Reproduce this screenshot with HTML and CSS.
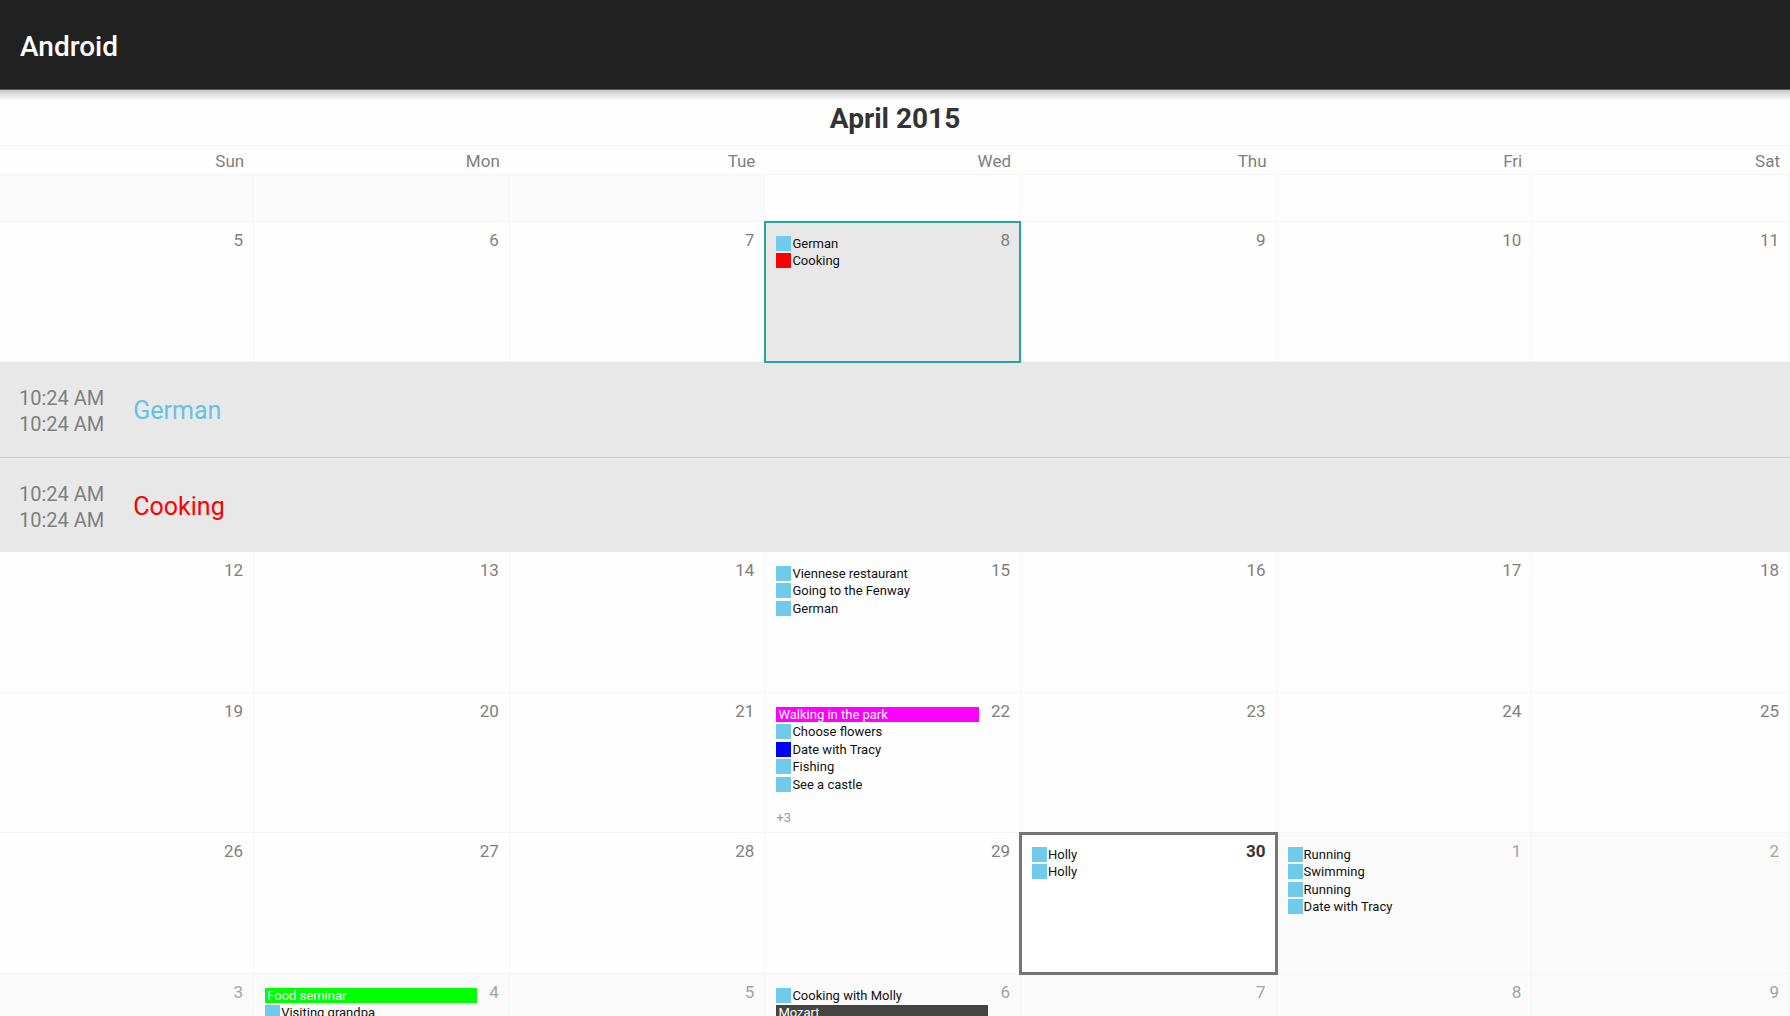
FILE: index.html
```html
<!DOCTYPE html>
<html lang="en">
<head>
<meta charset="utf-8">
<title>Android</title>
<link rel="stylesheet" href="styles.css">
</head>
<body>
<div class="screen">
  <header class="app-bar"><h1 class="app-title">Android</h1></header>
  <main class="calendar">
    <h2 class="month" id="month">April 2015</h2>
    <table class="grid" aria-labelledby="month">
      <colgroup><col class="c-first"><col><col><col><col><col><col class="c-last"></colgroup>
      <thead>
        <tr><th scope="col">Sun</th><th scope="col">Mon</th><th scope="col">Tue</th><th scope="col">Wed</th><th scope="col">Thu</th><th scope="col">Fri</th><th scope="col">Sat</th></tr>
      </thead>
      <tbody>
        <tr class="week partial"><td class="other"></td><td class="other"></td><td class="other"></td><td></td><td></td><td></td><td></td></tr>
        <tr class="week">
          <td><div class="day"><span class="num">5</span></div></td>
          <td><div class="day"><span class="num">6</span></div></td>
          <td><div class="day"><span class="num">7</span></div></td>
          <td class="selected"><div class="day">
            <div class="agenda"><ul class="events">
              <li class="event">German</li>
              <li class="event red">Cooking</li>
            </ul></div>
            <span class="num">8</span></div></td>
          <td><div class="day"><span class="num">9</span></div></td>
          <td><div class="day"><span class="num">10</span></div></td>
          <td><div class="day"><span class="num">11</span></div></td>
        </tr>
        <tr class="details"><td colspan="7">
          <ul class="detail-list">
            <li class="detail"><div class="times"><time>10:24 AM</time><time>10:24 AM</time></div><span class="name">German</span></li>
            <li class="detail"><div class="times"><time>10:24 AM</time><time>10:24 AM</time></div><span class="name name-red">Cooking</span></li>
          </ul>
        </td></tr>
        <tr class="week tall">
          <td><div class="day"><span class="num">12</span></div></td>
          <td><div class="day"><span class="num">13</span></div></td>
          <td><div class="day"><span class="num">14</span></div></td>
          <td><div class="day">
            <div class="agenda"><ul class="events">
              <li class="event">Viennese restaurant</li>
              <li class="event">Going to the Fenway</li>
              <li class="event">German</li>
            </ul></div>
            <span class="num">15</span></div></td>
          <td><div class="day"><span class="num">16</span></div></td>
          <td><div class="day"><span class="num">17</span></div></td>
          <td><div class="day"><span class="num">18</span></div></td>
        </tr>
        <tr class="week">
          <td><div class="day"><span class="num">19</span></div></td>
          <td><div class="day"><span class="num">20</span></div></td>
          <td><div class="day"><span class="num">21</span></div></td>
          <td><div class="day">
            <div class="agenda"><ul class="events">
              <li class="event all-day magenta">Walking in the park</li>
              <li class="event">Choose flowers</li>
              <li class="event blue">Date with Tracy</li>
              <li class="event">Fishing</li>
              <li class="event">See a castle</li>
            </ul>
            <span class="more">+3</span></div>
            <span class="num">22</span></div></td>
          <td><div class="day"><span class="num">23</span></div></td>
          <td><div class="day"><span class="num">24</span></div></td>
          <td><div class="day"><span class="num">25</span></div></td>
        </tr>
        <tr class="week tall">
          <td><div class="day"><span class="num">26</span></div></td>
          <td><div class="day"><span class="num">27</span></div></td>
          <td><div class="day"><span class="num">28</span></div></td>
          <td><div class="day"><span class="num">29</span></div></td>
          <td class="today"><div class="day">
            <div class="agenda"><ul class="events">
              <li class="event">Holly</li>
              <li class="event">Holly</li>
            </ul></div>
            <span class="num">30</span></div></td>
          <td class="other"><div class="day">
            <div class="agenda"><ul class="events">
              <li class="event">Running</li>
              <li class="event">Swimming</li>
              <li class="event">Running</li>
              <li class="event">Date with Tracy</li>
            </ul></div>
            <span class="num">1</span></div></td>
          <td class="other"><div class="day"><span class="num">2</span></div></td>
        </tr>
        <tr class="week">
          <td class="other"><div class="day"><span class="num">3</span></div></td>
          <td class="other"><div class="day">
            <div class="agenda"><ul class="events">
              <li class="event all-day green">Food seminar</li>
              <li class="event">Visiting grandpa</li>
            </ul></div>
            <span class="num">4</span></div></td>
          <td class="other"><div class="day"><span class="num">5</span></div></td>
          <td class="other"><div class="day">
            <div class="agenda"><ul class="events">
              <li class="event">Cooking with Molly</li>
              <li class="event all-day dark">Mozart</li>
            </ul></div>
            <span class="num">6</span></div></td>
          <td class="other"><div class="day"><span class="num">7</span></div></td>
          <td class="other"><div class="day"><span class="num">8</span></div></td>
          <td class="other"><div class="day"><span class="num">9</span></div></td>
        </tr>
      </tbody>
    </table>
  </main>
</div>
</body>
</html>
```
FILE: styles.css
```css
* { box-sizing: border-box; }
body {
  margin: 0;
  font-family: Roboto, "Liberation Sans", sans-serif;
  background: #fefefe;
  color: #7f7f7f;
}
ul { list-style: none; margin: 0; padding: 0; }

.screen { height: 100vh; overflow: hidden; }

.app-bar {
  position: relative;
  display: flex;
  align-items: center;
  height: 90px;
  padding: 3px 20px 0;
  background: #212121;
  border-bottom: 1px solid #5c595b;
}
/* soft shadow the bar casts on the page */
.app-bar::after {
  content: "";
  position: absolute;
  top: 100%;
  left: 0;
  right: 0;
  height: 11px;
  margin-top: 1px;
  background: linear-gradient(#c9c7c8, #e4e4e4 45%, #fefefe);
}
.app-title { margin: 0; font-size: 28px; font-weight: 500; color: #fff; }

.month {
  display: flex;
  align-items: center;
  justify-content: center;
  height: 56px;
  margin: 0;
  padding-top: 2px;
  border-bottom: 1px solid #f3f3f3;
  font-size: 28px;
  font-weight: 700;
  color: #333;
  position: relative;
}

.grid {
  width: 100%;
  table-layout: fixed;
  border-collapse: separate;
  border-spacing: 0;
}
.c-first { width: 14.2%; }
.c-last { width: 14.4%; }
th {
  height: 29px;
  padding: 2px 10px 0 0;
  border-bottom: 1px solid #f5f5f5;
  text-align: right;
  font-size: 17px;
  font-weight: 400;
  line-height: 20px;
}
td { padding: 0; vertical-align: top; }

.week { height: 140px; }
.week.tall { height: 141px; }
.week.partial { height: 47px; }
.week td {
  position: relative;
  border-right: 1px solid #f5f5f5;
  border-bottom: 1px solid #f5f5f5;
}
.week .other { background: #fafafa; }
.other .num { color: #a3a3a3; }

.selected { background: #e8e8e8; }
.selected::after, .today::after {
  content: "";
  position: absolute;
  z-index: 1;
  inset: -1px -1px -2px -1px;
  border: 2px solid #26a69a;
}
.today { background: #fff; }
.today::after { inset: -1px -2px -2px -2px; border: 3px solid #757575; }
.today .num { color: #333; font-weight: 700; }

.day {
  display: flex;
  justify-content: flex-end;
  align-items: flex-start;
  gap: 12px;
  padding: 7px 10px 0 11px;
}
.num { font-size: 17px; line-height: 22px; }

.agenda { flex: 1; min-width: 0; padding-top: 7px; }
.event {
  display: flex;
  align-items: center;
  gap: 1px;
  height: 15px;
  margin-bottom: 2px;
  font-size: 13px;
  line-height: 15px;
  color: #111;
  white-space: nowrap;
}
.event:nth-child(even) { margin-bottom: 3px; }
.event::before {
  content: "";
  width: 15px;
  height: 15px;
  background: #70caec;
}
.red::before { background: #f00; }
.blue::before { background: #00f; }
.all-day { padding-left: 2px; color: #fff; }
.all-day::before { display: none; }
.magenta { background: #f0f; }
.green { background: #0f0; }
.dark { background: #444; }
.more { display: block; margin-top: 18px; font-size: 13px; line-height: 16px; color: #999; }

.detail-list { background: #e8e8e8; }
.detail {
  display: flex;
  align-items: center;
  gap: 29px;
  height: 95px;
  padding: 3px 0 0 19px;
}
.detail + .detail { border-top: 1px solid #ccc; }
.times { display: flex; flex-direction: column; font-size: 20px; line-height: 26px; }
.name { font-size: 25px; line-height: 32px; color: #66c2e5; }
.name-red { color: #f00; }
```
